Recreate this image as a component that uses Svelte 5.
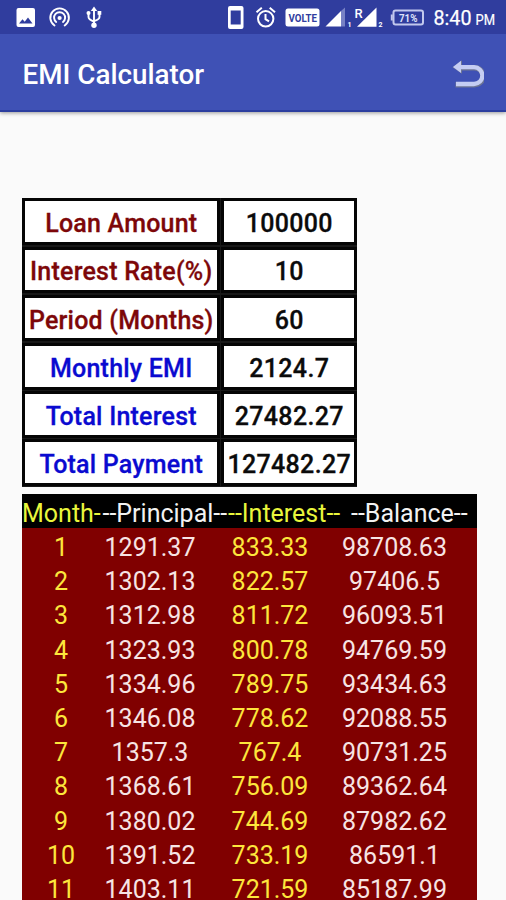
<script>
  const summary = [
    { label: 'Loan Amount', value: '100000' },
    { label: 'Interest Rate(%)', value: '10' },
    { label: 'Period (Months)', value: '60' },
    { label: 'Monthly EMI', value: '2124.7', result: true },
    { label: 'Total Interest', value: '27482.27', result: true },
    { label: 'Total Payment', value: '127482.27', result: true }
  ];
  const rows = [
    ['1', '1291.37', '833.33', '98708.63'],
    ['2', '1302.13', '822.57', '97406.5'],
    ['3', '1312.98', '811.72', '96093.51'],
    ['4', '1323.93', '800.78', '94769.59'],
    ['5', '1334.96', '789.75', '93434.63'],
    ['6', '1346.08', '778.62', '92088.55'],
    ['7', '1357.3', '767.4', '90731.25'],
    ['8', '1368.61', '756.09', '89362.64'],
    ['9', '1380.02', '744.69', '87982.62'],
    ['10', '1391.52', '733.19', '86591.1'],
    ['11', '1403.11', '721.59', '85187.99']
  ];
</script>

<div class="screen">
  <header>
    <div class="status">
      <svg class="icons" width="506" height="34" viewBox="0 0 506 34" fill="#fff">
        <path fill-rule="evenodd" d="M18.500 8h14.500a2 2 0 0 1 2 2v15a2 2 0 0 1-2 2H18.500a2 2 0 0 1-2-2V10a2 2 0 0 1 2-2ZM19 23.500h13.500l-4.500-6-3.300 4.200-2.200-2.500Z" />
        <g fill="none" stroke="#fff" stroke-width="1.900" stroke-linecap="round">
          <path d="M54.500 25.500a9.300 9.300 0 1 1 10.200 0" />
          <path d="M56.200 22a5.500 5.500 0 1 1 6.800 0" />
        </g>
        <circle cx="59.600" cy="18" r="2.100" />
        <g fill="none" stroke="#fff" stroke-width="1.900">
          <path d="M94 9v16M88.500 13v4q0 2.500 5.500 4.500M99.500 14v3q0 2.500-5.500 4" />
        </g>
        <path d="M94 6.500l3.200 4.500h-6.400Z" />
        <circle cx="94" cy="25.200" r="2.700" /><circle cx="88.500" cy="13" r="2" /><path d="M97.600 11h3.700v3.800h-3.700Z" />
        <path fill-rule="evenodd" d="M230 6h11.500a2 2 0 0 1 2 2v19a2 2 0 0 1-2 2H230a2 2 0 0 1-2-2V8a2 2 0 0 1 2-2ZM230.700 10.500v14h10v-14Z" />
        <g fill="none" stroke="#fff" stroke-width="2">
          <circle cx="265.700" cy="18.800" r="7.700" />
          <path d="M265.500 14v5.200l3.500 2.200M256.500 12.200l5.300-4.400M269.700 7.800l5.300 4.400" />
        </g>
        <rect x="285.500" y="8.500" width="34" height="18" rx="2.500" />
        <path d="M325.500 26.500L341 11v15.500Z" /><path d="M341 11l4-3.500v19h-4Z" fill="#7781c5" />
        <path d="M357 26.800L376.500 7.500v19.300Z" />
        <rect x="393.500" y="10.500" width="29.500" height="14" rx="2" fill="none" stroke="#c2c8ed" stroke-width="2" />
        <path d="M390.800 14.500h2v6h-2Z" fill="#c2c8ed" />
        <text x="288.500" y="21.700" font-size="11" font-weight="700" fill="#303d9e" textLength="28.500" lengthAdjust="spacingAndGlyphs">VOLTE</text>
        <text x="347.500" y="26.500" font-size="7" font-weight="700">1</text>
        <text x="354.500" y="17.500" font-size="13" font-weight="500">R</text>
        <text x="378.500" y="26.500" font-size="7" font-weight="700">2</text>
        <text x="399" y="21.700" font-size="11" font-weight="700" fill="#dfe3fa" textLength="18.500" lengthAdjust="spacingAndGlyphs">71%</text>
        <text x="433.500" y="25" font-size="20.500" textLength="38" lengthAdjust="spacingAndGlyphs" stroke="#fff" stroke-width=".25">8:40</text>
        <text x="475.500" y="25" font-size="14" textLength="19.500" lengthAdjust="spacingAndGlyphs" stroke="#fff" stroke-width=".2">PM</text>
      </svg>
    </div>
    <div class="appbar">
      <h1>EMI Calculator</h1>
      <svg width="34" height="32" viewBox="450 58 34 32">
        <path d="M461 67.700h13.500a8 8 0 0 1 0 17h-19" fill="none" stroke="#6e7694" stroke-width="5.400" />
        <path d="M452.500 67.200l9.500-7v13.500Z" fill="#6e7694" />
        <path d="M460 67.200h14a8 8 0 0 1 0 16.800h-18" fill="none" stroke="#c5cdf3" stroke-width="4.300" />
        <path d="M453 67l8-6.300v12.300Z" fill="#c5cdf3" />
      </svg>
    </div>
  </header>

  <main>
    <section class="summary">
      {#each summary as item}
        <div class="cell label" class:result={item.result}>{item.label}</div>
        <div class="cell">{item.value}</div>
      {/each}
    </section>

    <section class="schedule">
      <div class="head">
        <span class="y h1">Month-</span><span class="h2">--Principal--</span><span class="y h3">--Interest--</span><span class="h4">--Balance--</span>
      </div>
      {#each rows as [month, principal, interest, balance]}
        <div class="row">
          <span class="y c1">{month}</span><span class="c2">{principal}</span><span class="y c3">{interest}</span><span class="c4">{balance}</span>
        </div>
      {/each}
    </section>
  </main>
</div>

<style>
  :global(body) { margin: 0; background: #fafafa; }
  .screen {
    width: 506px; height: 900px; overflow: hidden;
    display: flex; flex-direction: column;
    background: #fafafa; font-family: Roboto, sans-serif;
  }
  header { flex: none; box-shadow: 0 1px 4px rgba(0, 0, 0, .4); }
  .status { height: 34px; background: #303d9e; }
  .icons { display: block; }
  .appbar {
    height: 78px; box-sizing: border-box; padding: 0 22px 0 22.500px;
    display: flex; align-items: center; justify-content: space-between;
    background: #3f51b5; border-bottom: 2px solid #2c3e9f;
  }
  h1 { margin: 5px 0 0; font-size: 27.800px; line-height: 32px; font-weight: 500; color: #fff; }
  .appbar svg { margin-top: 4px; }
  main { padding: 86px 0 0 22px; }
  .summary {
    width: 335px; height: 288.500px; box-sizing: border-box; padding: 3.400px 3px;
    display: grid; grid-template-columns: 191.500px 130.500px; grid-template-rows: repeat(6, 40.600px);
    gap: 7.600px 7px; background: #181818;
  }
  .cell {
    display: flex; align-items: center; justify-content: center; white-space: nowrap;
    padding: 4px 0 0 1px; box-sizing: border-box;
    background: #fff; box-shadow: 0 0 0 3px #050505;
    font-size: 25px; font-weight: 500; color: #0b0b0b; letter-spacing: .3px;
    -webkit-text-stroke: .3px currentColor;
  }
  .label { color: #7d0709; letter-spacing: .22px; }
  .label.result { color: #0a0ad0; }
  .schedule { width: 455px; margin-top: 7.500px; background: #800000; color: #f7e4e4; font-size: 25px; }
  .head { display: flex; height: 34px; line-height: 39px; background: #000; color: #f2f2f2; white-space: nowrap; }
  .row { display: flex; height: 34.200px; line-height: 40px; }
  .row span { text-align: center; }
  .c1 { width: 78px; }
  .c2 { width: 100px; }
  .c3 { width: 140px; }
  .c4 { width: 109px; }
  .h1 { width: 80.500px; }
  .h2 { width: 125.500px; }
  .h3 { width: 123px; }
  .row .y { color: #fde63c; }
  .head .y { color: #e9f63c; }
</style>
